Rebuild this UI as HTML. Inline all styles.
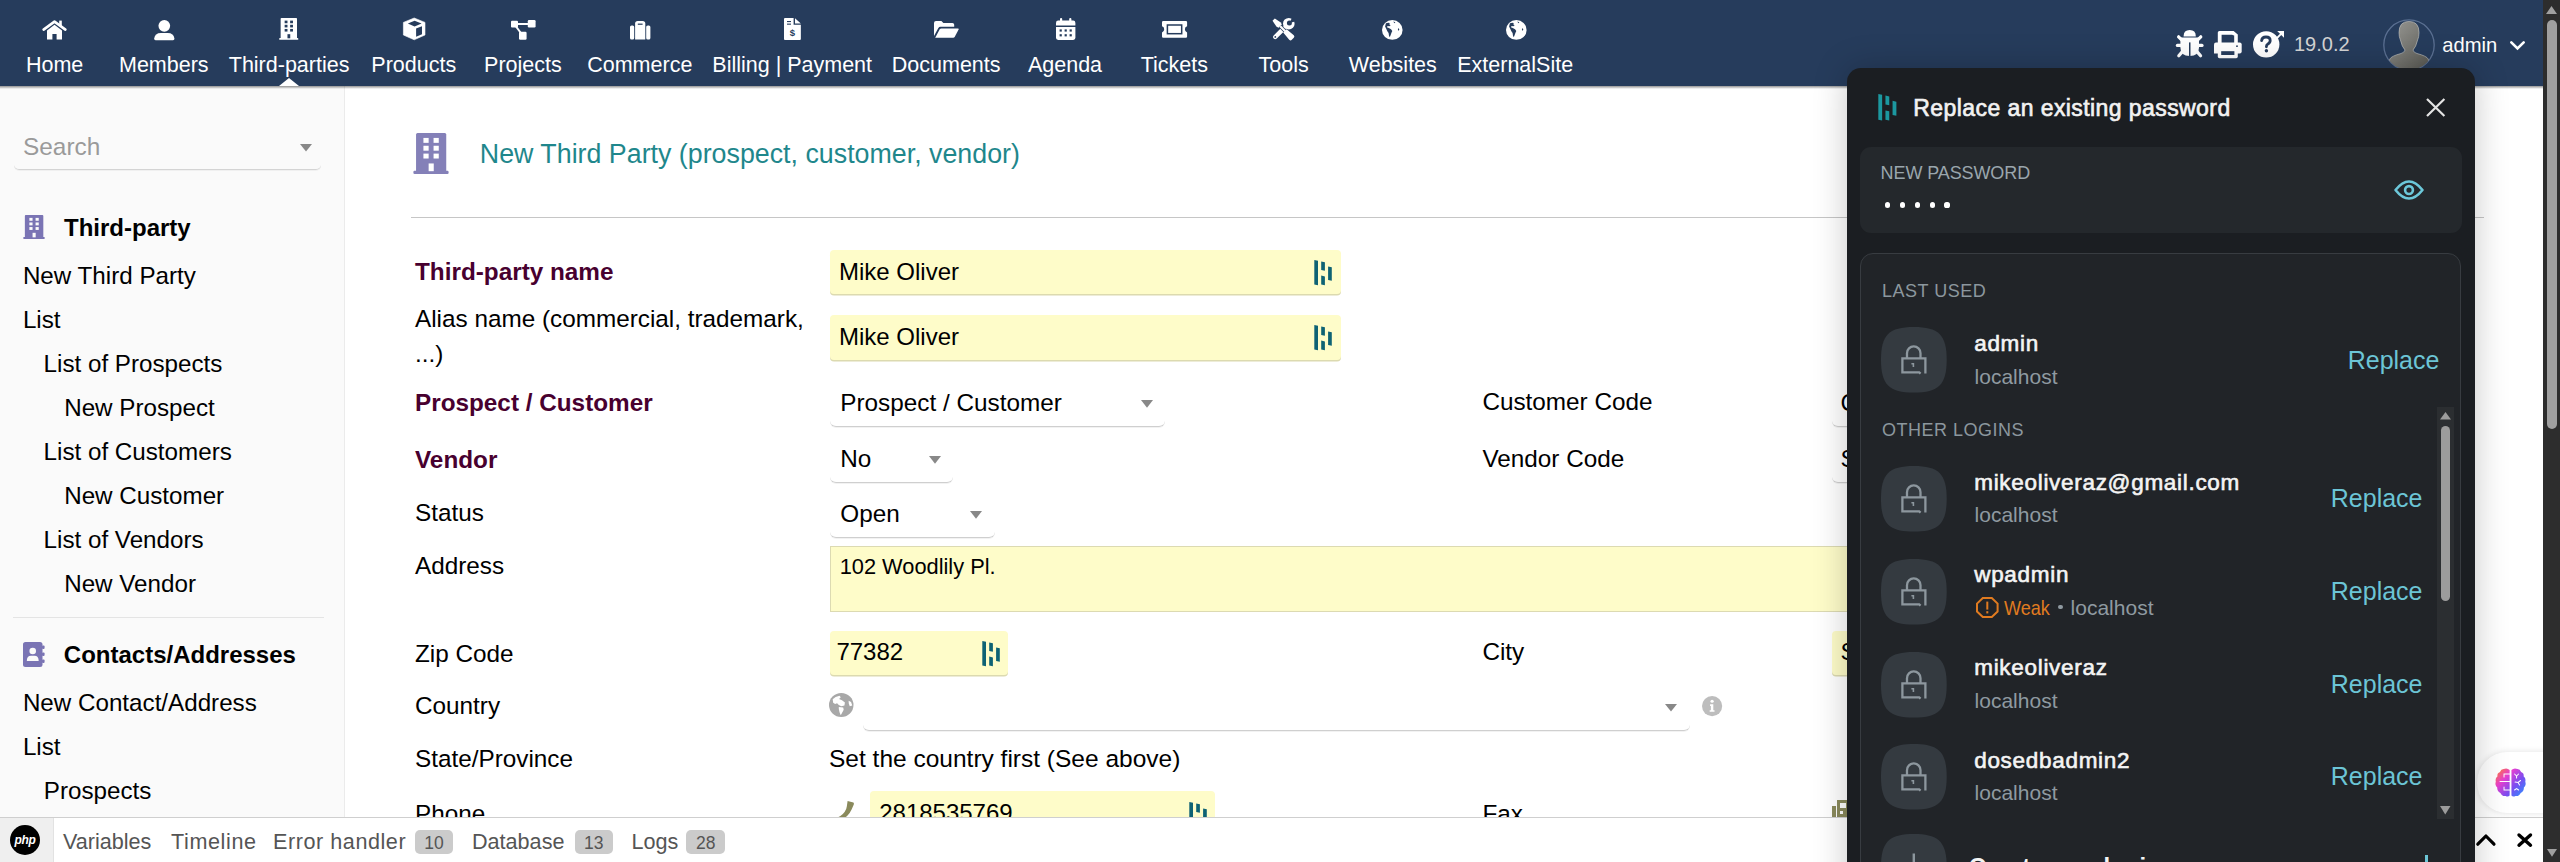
<!DOCTYPE html><html><head><meta charset="utf-8"><title>Dolibarr</title><style>
html,body{margin:0;padding:0;}
body{width:2560px;height:862px;overflow:hidden;position:relative;background:#fff;font-family:"Liberation Sans",sans-serif;}
.a{position:absolute;}
.t{position:absolute;white-space:nowrap;line-height:1;}
svg.a{overflow:visible;}
</style></head><body>
<div class="a" style="left:0px;top:86px;width:344.00px;height:731.00px;background:#fafafa;"></div>
<div class="a" style="left:344px;top:86px;width:1.00px;height:731.00px;background:#ebebeb;"></div>
<div class="t" style="left:23.0px;top:134.9px;font-size:24.4px;color:#9a9a9a;">Search</div>
<div class="a" style="left:14px;top:161px;width:307.00px;height:8.00px;border-bottom:1px solid #d4d4d4;border-radius:0 0 5px 5px;box-shadow:0 1px 0.6px rgba(0,0,0,0.04);"></div>
<svg class="a" style="left:300px;top:143.5px;width:12.00px;height:7.50px;" viewBox="0 0 12 7.5" preserveAspectRatio="none"><path d="M0 0H12L6 7.5Z" fill="#888"/></svg>
<svg class="a" style="left:23px;top:215px;width:22.00px;height:24.00px;" viewBox="0 0 36.6 40.8" preserveAspectRatio="none"><rect x="3.1" y="0" width="30.7" height="38.5" rx="1.5" fill="#7a74b4"/><rect x="0.4" y="37.6" width="35.8" height="3.2" rx="1.2" fill="#7a74b4"/><rect x="10.6" y="4.9" width="5.3" height="4.9" fill="#fafafa"/><rect x="10.6" y="12.7" width="5.3" height="4.9" fill="#fafafa"/><rect x="10.6" y="20.5" width="5.3" height="4.9" fill="#fafafa"/><rect x="20.9" y="4.9" width="5.3" height="4.9" fill="#fafafa"/><rect x="20.9" y="12.7" width="5.3" height="4.9" fill="#fafafa"/><rect x="20.9" y="20.5" width="5.3" height="4.9" fill="#fafafa"/><rect x="15.9" y="30.3" width="5.2" height="7.7" fill="#fafafa"/></svg>
<div class="t" style="left:64.0px;top:215.9px;font-size:24px;color:#000;font-weight:bold;">Third-party</div>
<div class="t" style="left:22.9px;top:263.6px;font-size:24.2px;color:#000;">New Third Party</div>
<div class="t" style="left:22.9px;top:307.6px;font-size:24.2px;color:#000;">List</div>
<div class="t" style="left:43.6px;top:351.6px;font-size:24.2px;color:#000;">List of Prospects</div>
<div class="t" style="left:64.2px;top:395.6px;font-size:24.2px;color:#000;">New Prospect</div>
<div class="t" style="left:43.6px;top:439.6px;font-size:24.2px;color:#000;">List of Customers</div>
<div class="t" style="left:64.2px;top:483.6px;font-size:24.2px;color:#000;">New Customer</div>
<div class="t" style="left:43.6px;top:527.6px;font-size:24.2px;color:#000;">List of Vendors</div>
<div class="t" style="left:64.2px;top:571.6px;font-size:24.2px;color:#000;">New Vendor</div>
<div class="a" style="left:13px;top:617px;width:311.00px;height:1.00px;background:#e4e4e4;"></div>
<svg class="a" style="left:23px;top:642px;width:21.60px;height:25.00px;" viewBox="0 0 21.6 25" preserveAspectRatio="none"><rect x="0" y="0" width="19.5" height="25" rx="2.5" fill="#7a74b4"/><rect x="19" y="3.5" width="2.6" height="3.5" rx="1" fill="#7a74b4"/><rect x="19" y="10.5" width="2.6" height="3.5" rx="1" fill="#7a74b4"/><rect x="19" y="17.5" width="2.6" height="3.5" rx="1" fill="#7a74b4"/><circle cx="9.75" cy="9" r="3.3" fill="#fafafa"/><path d="M3.8 19 Q3.8 13.8 8 13.8 H11.5 Q15.7 13.8 15.7 19Z" fill="#fafafa"/></svg>
<div class="t" style="left:63.8px;top:643.0px;font-size:24px;color:#000;font-weight:bold;">Contacts/Addresses</div>
<div class="t" style="left:22.9px;top:690.5px;font-size:24.2px;color:#000;">New Contact/Address</div>
<div class="t" style="left:22.9px;top:734.5px;font-size:24.2px;color:#000;">List</div>
<div class="t" style="left:43.8px;top:778.5px;font-size:24.2px;color:#000;">Prospects</div>
<svg class="a" style="left:413px;top:133px;width:36.00px;height:41.00px;" viewBox="0 0 36.6 40.8" preserveAspectRatio="none"><rect x="3.1" y="0" width="30.7" height="38.5" rx="1.5" fill="#8480b8"/><rect x="0.4" y="37.6" width="35.8" height="3.2" rx="1.2" fill="#8480b8"/><rect x="10.6" y="4.9" width="5.3" height="4.9" fill="#fff"/><rect x="10.6" y="12.7" width="5.3" height="4.9" fill="#fff"/><rect x="10.6" y="20.5" width="5.3" height="4.9" fill="#fff"/><rect x="20.9" y="4.9" width="5.3" height="4.9" fill="#fff"/><rect x="20.9" y="12.7" width="5.3" height="4.9" fill="#fff"/><rect x="20.9" y="20.5" width="5.3" height="4.9" fill="#fff"/><rect x="15.9" y="30.3" width="5.2" height="7.7" fill="#fff"/></svg>
<div class="t" style="left:479.8px;top:140.6px;font-size:26.8px;color:#1f878c;">New Third Party (prospect, customer, vendor)</div>
<div class="a" style="left:411px;top:216.5px;width:2073.00px;height:1.00px;background:#c6c6c6;"></div>
<div class="t" style="left:415.0px;top:259.8px;font-size:24.3px;color:#48002f;font-weight:bold;">Third-party name</div>
<div class="t" style="left:415.0px;top:307.2px;font-size:24.3px;color:#000;">Alias name (commercial, trademark,</div>
<div class="t" style="left:415.0px;top:342.2px;font-size:24.3px;color:#000;">...)</div>
<div class="t" style="left:415.0px;top:390.9px;font-size:24.3px;color:#48002f;font-weight:bold;">Prospect / Customer</div>
<div class="t" style="left:415.0px;top:448.4px;font-size:24.3px;color:#48002f;font-weight:bold;">Vendor</div>
<div class="t" style="left:415.0px;top:501.4px;font-size:24.3px;color:#000;">Status</div>
<div class="t" style="left:415.0px;top:553.7px;font-size:24.3px;color:#000;">Address</div>
<div class="t" style="left:415.0px;top:641.7px;font-size:24.3px;color:#000;">Zip Code</div>
<div class="t" style="left:415.0px;top:694.0px;font-size:24.3px;color:#000;">Country</div>
<div class="t" style="left:415.0px;top:747.3px;font-size:24.3px;color:#000;">State/Province</div>
<div class="t" style="left:415.0px;top:802.4px;font-size:24.3px;color:#000;">Phone</div>
<div class="t" style="left:1482.4px;top:390.3px;font-size:24.3px;color:#000;">Customer Code</div>
<div class="t" style="left:1482.4px;top:446.9px;font-size:24.3px;color:#000;">Vendor Code</div>
<div class="t" style="left:1482.4px;top:639.9px;font-size:24.3px;color:#000;">City</div>
<div class="t" style="left:1482.4px;top:802.4px;font-size:24.3px;color:#000;">Fax</div>
<div class="a" style="left:830px;top:249.5px;width:511.00px;height:44.50px;background:#fefcc9;border-radius:4px;box-shadow:0 1.5px 0 #dcdab0;"></div>
<div class="t" style="left:839.0px;top:259.7px;font-size:24px;color:#000;">Mike Oliver</div>
<svg class="a" style="left:1314px;top:259.6px;width:18.00px;height:25.20px;" viewBox="0 0 18 25.2" preserveAspectRatio="none"><path d="M0.3 0 L4 0.8 V25.2 L0.3 24.4Z" fill="#0e6274"/><path d="M7.2 1.5 L10.9 2.3 V10.8 L7.2 10Z" fill="#0e6274"/><path d="M7.2 15.6 L10.9 16.4 V25.2 L7.2 24.4Z" fill="#0e6274"/><path d="M14.1 6.5 L17.8 7.3 V20.7 L14.1 19.9Z" fill="#0e6274"/></svg>
<div class="a" style="left:830px;top:315px;width:511.00px;height:44.50px;background:#fefcc9;border-radius:4px;box-shadow:0 1.5px 0 #dcdab0;"></div>
<div class="t" style="left:839.0px;top:324.5px;font-size:24px;color:#000;">Mike Oliver</div>
<svg class="a" style="left:1314px;top:324.6px;width:18.00px;height:25.20px;" viewBox="0 0 18 25.2" preserveAspectRatio="none"><path d="M0.3 0 L4 0.8 V25.2 L0.3 24.4Z" fill="#0e6274"/><path d="M7.2 1.5 L10.9 2.3 V10.8 L7.2 10Z" fill="#0e6274"/><path d="M7.2 15.6 L10.9 16.4 V25.2 L7.2 24.4Z" fill="#0e6274"/><path d="M14.1 6.5 L17.8 7.3 V20.7 L14.1 19.9Z" fill="#0e6274"/></svg>
<div class="a" style="left:830px;top:417px;width:335.00px;height:9.00px;border-bottom:1px solid #cfcfcf;border-radius:0 0 6px 6px;box-shadow:0 1px 0.6px rgba(0,0,0,0.05);"></div>
<div class="t" style="left:840.3px;top:390.5px;font-size:24.3px;color:#000;">Prospect / Customer</div>
<svg class="a" style="left:1141px;top:400px;width:12.00px;height:7.80px;" viewBox="0 0 12 7.8" preserveAspectRatio="none"><path d="M0 0H12L6 7.8Z" fill="#888"/></svg>
<div class="a" style="left:830px;top:473px;width:123.00px;height:9.00px;border-bottom:1px solid #cfcfcf;border-radius:0 0 6px 6px;box-shadow:0 1px 0.6px rgba(0,0,0,0.05);"></div>
<div class="t" style="left:840.3px;top:447.0px;font-size:24.3px;color:#000;">No</div>
<svg class="a" style="left:929px;top:456px;width:12.00px;height:7.80px;" viewBox="0 0 12 7.8" preserveAspectRatio="none"><path d="M0 0H12L6 7.8Z" fill="#888"/></svg>
<div class="a" style="left:830px;top:528px;width:165.00px;height:9.00px;border-bottom:1px solid #cfcfcf;border-radius:0 0 6px 6px;box-shadow:0 1px 0.6px rgba(0,0,0,0.05);"></div>
<div class="t" style="left:840.3px;top:502.4px;font-size:24.3px;color:#000;">Open</div>
<svg class="a" style="left:970px;top:511px;width:12.00px;height:7.80px;" viewBox="0 0 12 7.8" preserveAspectRatio="none"><path d="M0 0H12L6 7.8Z" fill="#888"/></svg>
<div class="a" style="left:1832px;top:417px;width:168.00px;height:9.00px;border-bottom:1px solid #cfcfcf;border-radius:0 0 6px 6px;box-shadow:0 1px 0.6px rgba(0,0,0,0.05);"></div>
<svg class="a" style="left:3000px;top:400px;width:12.00px;height:7.80px;" viewBox="0 0 12 7.8" preserveAspectRatio="none"><path d="M0 0H12L6 7.8Z" fill="#888"/></svg>
<div class="t" style="left:1840.5px;top:390.6px;font-size:24px;color:#000;">C</div>
<div class="a" style="left:1832px;top:473px;width:168.00px;height:9.00px;border-bottom:1px solid #cfcfcf;border-radius:0 0 6px 6px;box-shadow:0 1px 0.6px rgba(0,0,0,0.05);"></div>
<svg class="a" style="left:3000px;top:456px;width:12.00px;height:7.80px;" viewBox="0 0 12 7.8" preserveAspectRatio="none"><path d="M0 0H12L6 7.8Z" fill="#888"/></svg>
<div class="t" style="left:1840.5px;top:447.2px;font-size:24px;color:#000;">S</div>
<div class="a" style="left:830px;top:546px;width:1070.00px;height:66.00px;background:#fefcc9;border:1px solid #dcdab2;box-sizing:border-box;"></div>
<div class="t" style="left:839.7px;top:555.6px;font-size:21.8px;color:#000;">102 Woodlily Pl.</div>
<div class="a" style="left:830px;top:631px;width:178.00px;height:44.00px;background:#fefcc9;border-radius:4px;box-shadow:0 1.5px 0 #dcdab0;"></div>
<div class="t" style="left:836.4px;top:639.9px;font-size:24px;color:#000;">77382</div>
<svg class="a" style="left:981.5px;top:640.5px;width:18.00px;height:25.20px;" viewBox="0 0 18 25.2" preserveAspectRatio="none"><path d="M0.3 0 L4 0.8 V25.2 L0.3 24.4Z" fill="#0e6274"/><path d="M7.2 1.5 L10.9 2.3 V10.8 L7.2 10Z" fill="#0e6274"/><path d="M7.2 15.6 L10.9 16.4 V25.2 L7.2 24.4Z" fill="#0e6274"/><path d="M14.1 6.5 L17.8 7.3 V20.7 L14.1 19.9Z" fill="#0e6274"/></svg>
<div class="a" style="left:1832px;top:631px;width:168.00px;height:44.00px;background:#fefcc9;border-radius:4px;box-shadow:0 1.5px 0 #dcdab0;"></div>
<div class="t" style="left:1840.5px;top:639.9px;font-size:24px;color:#000;">S</div>
<svg class="a" style="left:829px;top:692.5px;width:24.50px;height:24.00px;" viewBox="0 0 20 20" preserveAspectRatio="none"><circle cx="10" cy="10" r="10" fill="#a8a8a8"/><path d="M3 5.2 Q5 2.6 8.6 2.2 L9.6 3.6 L8.2 5 L10.6 6 L13 8 L12.6 10.4 L10 11 L8 10 L6.6 8.6 L5 9.2 L3.4 8.2Z" fill="#fff"/><path d="M8 11.6 L11.6 12 L12 14 L10.6 16.6 L9.6 18.6 L8.6 16 L8 13.4Z" fill="#fff"/><path d="M16 6.4 L18 7.4 L19 10.4 L17 11 L16.2 9Z" fill="#fff"/></svg>
<div class="a" style="left:863px;top:722px;width:826.50px;height:8.00px;border-bottom:1px solid #cfcfcf;border-radius:0 0 6px 6px;box-shadow:0 1px 0.6px rgba(0,0,0,0.05);"></div>
<svg class="a" style="left:1665px;top:703.6px;width:12.00px;height:7.60px;" viewBox="0 0 12 7.6" preserveAspectRatio="none"><path d="M0 0H12L6 7.6Z" fill="#888"/></svg>
<svg class="a" style="left:1702px;top:695.6px;width:20.20px;height:20.20px;" viewBox="0 0 20 20" preserveAspectRatio="none"><circle cx="10" cy="10" r="10" fill="#bdbdbd"/><circle cx="10" cy="5.2" r="1.6" fill="#fff"/><path d="M8 8.2H11.2V14H12.4V15.6H7.6V14H8.8V9.8H8Z" fill="#fff"/></svg>
<div class="t" style="left:829.0px;top:746.7px;font-size:24.5px;color:#000;">Set the country first (See above)</div>
<svg class="a" style="left:833px;top:801px;width:21.00px;height:21.00px;" viewBox="0 0 21 21" preserveAspectRatio="none"><path d="M14.6 0 L20.4 1.4 Q21.2 2 20.8 3.4 L18.6 8.6 Q15 16.6 7 19.6 L0.6 21 L0 18.4 L4.6 16.6 Q10.6 14 13.2 8 L13.8 5.6Z" fill="#8a8a5c"/></svg>
<div class="a" style="left:869.6px;top:791.3px;width:345.40px;height:48.70px;background:#fefcc9;border-radius:4px;box-shadow:0 1.5px 0 #dcdab0;"></div>
<div class="t" style="left:879.2px;top:801.2px;font-size:24px;color:#000;">2818535769</div>
<svg class="a" style="left:1188.8px;top:801.8px;width:18.00px;height:25.20px;" viewBox="0 0 18 25.2" preserveAspectRatio="none"><path d="M0.3 0 L4 0.8 V25.2 L0.3 24.4Z" fill="#0e6274"/><path d="M7.2 1.5 L10.9 2.3 V10.8 L7.2 10Z" fill="#0e6274"/><path d="M7.2 15.6 L10.9 16.4 V25.2 L7.2 24.4Z" fill="#0e6274"/><path d="M14.1 6.5 L17.8 7.3 V20.7 L14.1 19.9Z" fill="#0e6274"/></svg>
<svg class="a" style="left:1832px;top:800px;width:18.00px;height:22.00px;" viewBox="0 0 18 22" preserveAspectRatio="none"><rect x="0" y="6" width="4" height="16" fill="#8a8a5c"/><rect x="5" y="0" width="13" height="22" fill="#8a8a5c"/><rect x="8" y="3" width="6" height="5" fill="#fff"/><rect x="8" y="11" width="3" height="3" fill="#fff"/></svg>
<div class="a" style="left:0px;top:0px;width:2543.00px;height:86.00px;background:#263c5c;"></div>
<div class="a" style="left:0px;top:86px;width:2543.00px;height:2.50px;background:linear-gradient(rgba(0,0,0,0.42),rgba(0,0,0,0));"></div>
<div class="t" style="left:-95.4px;width:300px;text-align:center;top:54.6px;font-size:21.5px;color:#fff;font-weight:normal">Home</div>
<div class="t" style="left:13.8px;width:300px;text-align:center;top:54.6px;font-size:21.5px;color:#fff;font-weight:normal">Members</div>
<div class="t" style="left:139.1px;width:300px;text-align:center;top:54.6px;font-size:21.5px;color:#fff;font-weight:normal">Third-parties</div>
<div class="t" style="left:263.8px;width:300px;text-align:center;top:54.6px;font-size:21.5px;color:#fff;font-weight:normal">Products</div>
<div class="t" style="left:372.9px;width:300px;text-align:center;top:54.6px;font-size:21.5px;color:#fff;font-weight:normal">Projects</div>
<div class="t" style="left:489.8px;width:300px;text-align:center;top:54.6px;font-size:21.5px;color:#fff;font-weight:normal">Commerce</div>
<div class="t" style="left:642.2px;width:300px;text-align:center;top:54.6px;font-size:21.5px;color:#fff;font-weight:normal">Billing | Payment</div>
<div class="t" style="left:796.2px;width:300px;text-align:center;top:54.6px;font-size:21.5px;color:#fff;font-weight:normal">Documents</div>
<div class="t" style="left:915.0px;width:300px;text-align:center;top:54.6px;font-size:21.5px;color:#fff;font-weight:normal">Agenda</div>
<div class="t" style="left:1024.4px;width:300px;text-align:center;top:54.6px;font-size:21.5px;color:#fff;font-weight:normal">Tickets</div>
<div class="t" style="left:1133.6px;width:300px;text-align:center;top:54.6px;font-size:21.5px;color:#fff;font-weight:normal">Tools</div>
<div class="t" style="left:1242.8px;width:300px;text-align:center;top:54.6px;font-size:21.5px;color:#fff;font-weight:normal">Websites</div>
<div class="t" style="left:1365.2px;width:300px;text-align:center;top:54.6px;font-size:21.5px;color:#fff;font-weight:normal">ExternalSite</div>
<svg class="a" style="left:279px;top:78px;width:20.00px;height:8.00px;" viewBox="0 0 20 8" preserveAspectRatio="none"><path d="M0 8 L10 0 L20 8Z" fill="#fff"/></svg>
<svg class="a" style="left:42px;top:19.6px;width:25.00px;height:19.40px;" viewBox="0 0 25 19.4" preserveAspectRatio="none"><path d="M1.6 9.6 L12.5 1.6 L23.4 9.6" fill="none" stroke="#fff" stroke-width="2.6" stroke-linecap="round" stroke-linejoin="round"/><rect x="17.2" y="0.6" width="2.6" height="5.6" fill="#fff"/><path d="M5 10.4 L12.5 4.8 L20 10.4 V19.4 H14.6 V14 H10.4 V19.4 H5Z" fill="#fff"/></svg>
<svg class="a" style="left:153.6px;top:19.6px;width:20.60px;height:20.15px;" viewBox="0 0 20.6 20.15" preserveAspectRatio="none"><circle cx="10.3" cy="5.85" r="5.85" fill="#fff"/><path d="M1.6 20.15 Q0 20.15 0.2 18.4 Q1 12.9 6.8 12.9 H13.8 Q19.6 12.9 20.4 18.4 Q20.6 20.15 19 20.15Z" fill="#fff"/></svg>
<svg class="a" style="left:279px;top:18.2px;width:19.50px;height:21.80px;" viewBox="0 0 36.6 40.8" preserveAspectRatio="none"><rect x="3.1" y="0" width="30.7" height="38.5" rx="1.5" fill="#fff"/><rect x="0.4" y="37.6" width="35.8" height="3.2" rx="1.2" fill="#fff"/><rect x="10.6" y="4.9" width="5.3" height="4.9" fill="#263c5c"/><rect x="10.6" y="12.7" width="5.3" height="4.9" fill="#263c5c"/><rect x="10.6" y="20.5" width="5.3" height="4.9" fill="#263c5c"/><rect x="20.9" y="4.9" width="5.3" height="4.9" fill="#263c5c"/><rect x="20.9" y="12.7" width="5.3" height="4.9" fill="#263c5c"/><rect x="20.9" y="20.5" width="5.3" height="4.9" fill="#263c5c"/><rect x="15.9" y="30.3" width="5.2" height="7.7" fill="#263c5c"/></svg>
<svg class="a" style="left:402.6px;top:18.2px;width:22.40px;height:21.80px;" viewBox="0 0 22.4 21.8" preserveAspectRatio="none"><path d="M11.2 0 L22 4.4 V17 L11.2 21.8 L0.4 17 V4.4Z" fill="#fff" stroke="#fff" stroke-width="0.6" stroke-linejoin="round"/><path d="M11.6 2.7 L18.6 5.6 L11.6 8.5 L4.8 5.6Z" fill="#263c5c"/><path d="M13.1 10.6 L19 8.2 V16.2 L13.1 18.8Z" fill="#263c5c"/></svg>
<svg class="a" style="left:510.9px;top:19.6px;width:24.60px;height:19.70px;" viewBox="0 0 24.6 19.7" preserveAspectRatio="none"><rect x="0" y="0.8" width="7" height="6.6" rx="1" fill="#fff"/><rect x="16.8" y="0" width="7.8" height="7.4" rx="1.2" fill="#fff"/><rect x="8" y="11.8" width="7.6" height="7.9" rx="1.2" fill="#fff"/><path d="M6 4 H17" stroke="#fff" stroke-width="2"/><path d="M5 6.5 L9.5 12.5" stroke="#fff" stroke-width="2"/></svg>
<svg class="a" style="left:630px;top:20.7px;width:20.40px;height:18.60px;" viewBox="0 0 20.4 18.6" preserveAspectRatio="none"><rect x="0" y="4.4" width="4.2" height="14.2" rx="1.6" fill="#fff"/><rect x="16.2" y="4.4" width="4.2" height="14.2" rx="1.6" fill="#fff"/><path d="M5.1 18.6 V2.6 Q5.1 0 7.7 0 H12.7 Q15.3 0 15.3 2.6 V18.6Z" fill="#fff"/><rect x="7.8" y="2.6" width="4.8" height="1.2" fill="#263c5c"/></svg>
<svg class="a" style="left:783.75px;top:18.1px;width:16.85px;height:21.90px;" viewBox="0 0 16.85 21.9" preserveAspectRatio="none"><path d="M0 1 Q0 0 1 0 H9.6 V6.8 H16.85 V20.9 Q16.85 21.9 15.85 21.9 H1 Q0 21.9 0 20.9Z" fill="#fff"/><path d="M11 0.2 L16.85 5.6 H11Z" fill="#fff"/><rect x="3" y="3" width="4" height="1.1" fill="#263c5c"/><rect x="3" y="5.6" width="4" height="1.1" fill="#263c5c"/><text x="8.4" y="17.6" font-size="9.5" font-weight="bold" font-family="Liberation Sans" text-anchor="middle" fill="#263c5c">$</text></svg>
<svg class="a" style="left:933.75px;top:20.6px;width:25.00px;height:16.65px;" viewBox="0 0 25 16.65" preserveAspectRatio="none"><path d="M0 2 Q0 0 2 0 H7.4 L9.4 2 H18.4 Q20.2 2 20.2 3.8 V5.8 H6.4 Q5 5.8 4.2 7.2 L0 15Z" fill="#fff"/><path d="M1.2 16.65 L5.6 8.4 Q6.2 7.4 7.4 7.4 H23.8 Q25.2 7.4 24.6 8.6 L20.8 15.8 Q20.3 16.65 19.2 16.65Z" fill="#fff"/></svg>
<svg class="a" style="left:1055.6px;top:18.1px;width:19.40px;height:21.90px;" viewBox="0 0 19.4 21.9" preserveAspectRatio="none"><path d="M0 5 Q0 2.6 2.2 2.6 H17.2 Q19.4 2.6 19.4 5 V7.6 H0Z" fill="#fff"/><rect x="4" y="0" width="2.2" height="4.4" rx="1" fill="#fff"/><rect x="13.2" y="0" width="2.2" height="4.4" rx="1" fill="#fff"/><path d="M0 9 H19.4 V19.8 Q19.4 21.9 17.2 21.9 H2.2 Q0 21.9 0 19.8Z" fill="#fff"/><rect x="3.6" y="11.4" width="2.2" height="2.2" fill="#263c5c"/><rect x="3.6" y="16.2" width="2.2" height="2.2" fill="#263c5c"/><rect x="8.6" y="11.4" width="2.2" height="2.2" fill="#263c5c"/><rect x="8.6" y="16.2" width="2.2" height="2.2" fill="#263c5c"/><rect x="13.6" y="11.4" width="2.2" height="2.2" fill="#263c5c"/><rect x="13.6" y="16.2" width="2.2" height="2.2" fill="#263c5c"/></svg>
<svg class="a" style="left:1162.2px;top:20.7px;width:25.10px;height:16.70px;" viewBox="0 0 25.1 16.7" preserveAspectRatio="none"><path d="M1.2 0 H23.9 Q25.1 0 25.1 1.2 V5.2 Q22.9 5.8 22.9 8.35 Q22.9 10.9 25.1 11.5 V15.5 Q25.1 16.7 23.9 16.7 H1.2 Q0 16.7 0 15.5 V11.5 Q2.2 10.9 2.2 8.35 Q2.2 5.8 0 5.2 V1.2 Q0 0 1.2 0Z" fill="#fff"/><rect x="5.4" y="4" width="14.3" height="8.7" fill="none" stroke="#263c5c" stroke-width="1.5"/></svg>
<svg class="a" style="left:1271.9px;top:18.4px;width:22.80px;height:22.10px;" viewBox="0 0 22.8 22.1" preserveAspectRatio="none"><path d="M11.6 10.6 L3.2 19" stroke="#fff" stroke-width="4.4" stroke-linecap="round"/><circle cx="16.8" cy="5.7" r="5.8" fill="#fff"/><circle cx="17.4" cy="5.1" r="2.5" fill="#263c5c"/><path d="M17.4 5.1 L20.2 -0.6 L24 3.2Z" fill="#263c5c"/><circle cx="3.3" cy="18.9" r="0.9" fill="#263c5c"/><path d="M8.2 8.2 L13.2 13.2" stroke="#263c5c" stroke-width="3.6"/><path d="M0.5 2.8 L2.8 0.5 L8.8 4.6 L9.8 6.6 L6.6 9.8 L4.6 8.8Z" fill="#fff"/><path d="M8.2 8.2 L13.2 13.2" stroke="#fff" stroke-width="2.2"/><path d="M11.2 14.6 L14.6 11.2 L21.8 17.2 Q23 18.6 21.8 19.8 L19.8 21.8 Q18.6 23 17.2 21.8Z" fill="#fff"/></svg>
<svg class="a" style="left:1382.3px;top:19.9px;width:20.60px;height:19.80px;" viewBox="0 0 20 20" preserveAspectRatio="none"><circle cx="10" cy="10" r="10" fill="#fff"/><path d="M3.8 3.4 Q5.6 2.4 7.6 3 L7 4.4 L8.4 5.2 L7.2 6.4 L5.4 6 L4.8 7.4 L6.6 8.2 L8.8 9.4 L10 11 L9.2 13 L8.4 15.2 L7.6 17.4 L6.8 15.8 L6.4 13.2 L5.2 11.4 L4.2 9 L3 6.6Z" fill="#263c5c"/><path d="M15.8 8 L16.8 9.4 L16.4 10.8 L15.4 10Z" fill="#263c5c"/><path d="M11 1.6 L13 2.2 L12 3.2Z" fill="#263c5c"/></svg>
<svg class="a" style="left:1505.7px;top:19.9px;width:20.60px;height:19.80px;" viewBox="0 0 20 20" preserveAspectRatio="none"><circle cx="10" cy="10" r="10" fill="#fff"/><path d="M3.8 3.4 Q5.6 2.4 7.6 3 L7 4.4 L8.4 5.2 L7.2 6.4 L5.4 6 L4.8 7.4 L6.6 8.2 L8.8 9.4 L10 11 L9.2 13 L8.4 15.2 L7.6 17.4 L6.8 15.8 L6.4 13.2 L5.2 11.4 L4.2 9 L3 6.6Z" fill="#263c5c"/><path d="M15.8 8 L16.8 9.4 L16.4 10.8 L15.4 10Z" fill="#263c5c"/><path d="M11 1.6 L13 2.2 L12 3.2Z" fill="#263c5c"/></svg>
<svg class="a" style="left:2176px;top:30.2px;width:27.40px;height:27.50px;" viewBox="0 0 27.4 27.5" preserveAspectRatio="none"><path d="M7.6 6.4 Q7.6 0 13.7 0 Q19.8 0 19.8 6.4Z" fill="#fff"/><path d="M4.4 7.4 H23 V17.6 Q23 26 13.7 26 Q4.4 26 4.4 17.6Z" fill="#fff"/><rect x="13" y="12.4" width="1.5" height="13.8" fill="#263c5c"/><g stroke="#fff" stroke-width="3.2" stroke-linecap="round"><path d="M6.4 10.6 L2.6 6.8"/><path d="M21 10.6 L24.8 6.8"/><path d="M5 15.4 H1.4"/><path d="M22.4 15.4 H26"/><path d="M6.4 21.6 L2.8 25.8"/><path d="M21 21.6 L24.6 25.8"/></g></svg>
<svg class="a" style="left:2213.9px;top:30.5px;width:27.70px;height:27.20px;" viewBox="0 0 27.7 27.2" preserveAspectRatio="none"><path d="M3.8 12 V1.6 Q3.8 0 5.4 0 H19.6 L23.8 3.6 V12 H20.2 V4.6 L18.4 4 V3.8 H7.6 V12Z" fill="#fff"/><path d="M0 20.6 V13.4 Q0 11.4 2 11.4 H25.7 Q27.7 11.4 27.7 13.4 V20.6 Q27.7 22.6 25.7 22.6 H0Z" fill="#fff"/><path d="M3.8 19 H23.8 V25.6 Q23.8 27.2 22.2 27.2 H5.4 Q3.8 27.2 3.8 25.6Z" fill="#fff"/><rect x="7.2" y="20.2" width="13.2" height="3.8" fill="#263c5c"/><circle cx="23" cy="15.2" r="0.9" fill="#263c5c"/></svg>
<svg class="a" style="left:2252.8px;top:30.7px;width:31.00px;height:26.60px;" viewBox="0 0 31 26.6" preserveAspectRatio="none"><circle cx="13.2" cy="13.4" r="13.2" fill="#fff"/><path d="M8.6 9.6 Q9 6 13 6 Q17.2 6 17.2 9.6 Q17.2 12 14.6 13.2 Q13.4 13.8 13.4 15.8" fill="none" stroke="#263c5c" stroke-width="2.8" stroke-linecap="round"/><circle cx="13.4" cy="19.8" r="1.7" fill="#263c5c"/><path d="M22 9 L29.4 1.6" stroke="#fff" stroke-width="1.8"/><path d="M24.2 0 H31 V6.8Z" fill="#fff"/></svg>
<div class="t" style="left:2294.0px;top:34.1px;font-size:20px;color:#d4d4d4;">19.0.2</div>
<svg class="a" style="left:2383px;top:19px;width:52.00px;height:52.00px;" viewBox="0 0 52 52" preserveAspectRatio="none"><defs><clipPath id="cp"><circle cx="26" cy="26" r="25"/></clipPath><linearGradient id="gg" x1="0" y1="0" x2="1" y2="1"><stop offset="0" stop-color="#9a9a96"/><stop offset="1" stop-color="#55554f"/></linearGradient></defs><circle cx="26" cy="26" r="25.2" fill="#263c5c" stroke="#5b7092" stroke-width="1.3"/><g clip-path="url(#cp)"><path d="M16 13.5 Q16 2.4 26 2.4 Q36 2.4 36 13.5 Q36 18 34.6 21 Q33 28 30 31 Q30.5 33.5 34 34.5 Q43.6 37 45.2 40 Q46.8 46 47 52 H5 Q5.2 46 6.8 40 Q8.4 37 18 34.5 Q21.5 33.5 22 31 Q19 28 17.4 21 Q16 18 16 13.5Z" fill="url(#gg)" stroke="#c8c8c4" stroke-width="0.6"/></g></svg>
<div class="t" style="left:2442.3px;top:35.1px;font-size:20.2px;color:#fff;">admin</div>
<svg class="a" style="left:2510px;top:41px;width:15.00px;height:9.00px;" viewBox="0 0 15 9" preserveAspectRatio="none"><path d="M1.3 1.3 L7.5 7.5 L13.7 1.3" fill="none" stroke="#fff" stroke-width="2.6" stroke-linecap="round"/></svg>
<div class="a" style="left:0px;top:816.5px;width:2543.00px;height:45.50px;background:#fff;border-top:1px solid #cfcfcf;box-sizing:border-box;"></div>
<div class="a" style="left:0px;top:817.5px;width:54.30px;height:44.50px;background:#efefef;border-right:1px solid #e2e2e2;box-sizing:border-box;"></div>
<svg class="a" style="left:10.2px;top:825.4px;width:30.00px;height:30.00px;" viewBox="0 0 30 30" preserveAspectRatio="none"><circle cx="15" cy="15" r="15" fill="#000"/><text x="15" y="19" font-size="12" font-style="italic" font-weight="bold" font-family="Liberation Sans" text-anchor="middle" fill="#fff" letter-spacing="-0.4">php</text></svg>
<div class="t" style="left:63.0px;top:830.7px;font-size:21.6px;color:#555;">Variables</div>
<div class="t" style="left:171.0px;top:830.7px;font-size:21.6px;color:#555;letter-spacing:0.6px;">Timeline</div>
<div class="t" style="left:273.0px;top:830.7px;font-size:21.6px;color:#555;letter-spacing:0.55px;">Error handler</div>
<div class="a" style="left:414.7px;top:830.4px;width:38.80px;height:23.60px;background:#cbcbcb;border-radius:5px;"></div>
<div class="t" style="left:414.1px;width:40px;text-align:center;top:835.2px;font-size:17.5px;color:#555;font-weight:normal">10</div>
<div class="t" style="left:472.0px;top:830.7px;font-size:21.6px;color:#555;">Database</div>
<div class="a" style="left:574.6px;top:830.4px;width:38.10px;height:23.60px;background:#cbcbcb;border-radius:5px;"></div>
<div class="t" style="left:573.7px;width:40px;text-align:center;top:835.2px;font-size:17.5px;color:#555;font-weight:normal">13</div>
<div class="t" style="left:631.5px;top:830.7px;font-size:21.6px;color:#555;">Logs</div>
<div class="a" style="left:686.2px;top:830.4px;width:39.10px;height:23.60px;background:#cbcbcb;border-radius:5px;"></div>
<div class="t" style="left:685.8px;width:40px;text-align:center;top:835.2px;font-size:17.5px;color:#555;font-weight:normal">28</div>
<svg class="a" style="left:2475.6px;top:834px;width:19.80px;height:12.00px;" viewBox="0 0 19.8 12" preserveAspectRatio="none"><path d="M1.8 10.2 L9.9 2 L18 10.2" fill="none" stroke="#000" stroke-width="3.2" stroke-linecap="round" stroke-linejoin="round"/></svg>
<svg class="a" style="left:2517.3px;top:832.6px;width:15.50px;height:14.20px;" viewBox="0 0 15.5 14.2" preserveAspectRatio="none"><path d="M2 2 L13.5 12.2 M13.5 2 L2 12.2" fill="none" stroke="#000" stroke-width="3.4" stroke-linecap="round"/></svg>
<div class="a" style="left:2477px;top:752px;width:123.00px;height:61.00px;background:#fff;border-radius:31px;box-shadow:0 0 6px rgba(0,0,0,0.12);"></div>
<svg class="a" style="left:2494.7px;top:767.6px;width:31.10px;height:29.00px;" viewBox="0 0 31 29" preserveAspectRatio="none"><defs><linearGradient id="bg1" gradientUnits="userSpaceOnUse" x1="2" y1="2" x2="29" y2="27"><stop offset="0" stop-color="#ff7a3d"/><stop offset="0.3" stop-color="#e83fd0"/><stop offset="0.65" stop-color="#7b4df0"/><stop offset="1" stop-color="#2f8cff"/></linearGradient></defs><path d="M14.6 2 Q12 -0.6 8.6 1 Q6 1.2 5 4 Q2 5 2.4 8.4 Q0 10.2 0.8 13.8 Q-0.4 17 2.2 19.6 Q2 23.6 5.4 25 Q7 28.6 10.6 28 Q13 29.4 14.6 27.6Z" fill="url(#bg1)"/><path d="M16.4 2 Q19 -0.6 22.4 1 Q25 1.2 26 4 Q29 5 28.6 8.4 Q31 10.2 30.2 13.8 Q31.4 17 28.8 19.6 Q29 23.6 25.6 25 Q24 28.6 20.4 28 Q18 29.4 16.4 27.6Z" fill="url(#bg1)"/><g stroke="#fff" stroke-width="1" fill="none" stroke-linecap="round"><path d="M14.6 6 H9 V9"/><path d="M14.6 13.5 H5"/><path d="M14.6 22 H9 V19"/><path d="M19.5 6 L21.5 8 L23.5 6 M21.5 8 V10"/><path d="M20 14 L23 14.5 L25.5 12.5 M23 14.5 L24.5 17"/><path d="M19.5 22 L21.5 20.5 L23.5 22"/></g></svg>
<div class="a" style="left:1847px;top:68px;width:628.00px;height:832.00px;border-radius:14px 14px 0 0;box-shadow:0 0 34px rgba(0,0,0,0.22);background:#1b1e22;"></div>
<svg class="a" style="left:1878.3px;top:94.3px;width:18.6px;height:26.5px;" viewBox="0 0 18 25.2" preserveAspectRatio="none"><path d="M0.3 0 L4 0.8 V25.2 L0.3 24.4Z" fill="#1c98a0"/><path d="M7.2 1.5 L10.9 2.3 V10.8 L7.2 10Z" fill="#1c98a0"/><path d="M7.2 15.6 L10.9 16.4 V25.2 L7.2 24.4Z" fill="#1c98a0"/><path d="M14.1 6.5 L17.8 7.3 V20.7 L14.1 19.9Z" fill="#1c98a0"/></svg>
<div class="t" style="left:1913.3px;top:96.9px;font-size:23px;color:#f2f2f2;letter-spacing:0.42px;-webkit-text-stroke:0.65px #f2f2f2;">Replace an existing password</div>
<svg class="a" style="left:2426px;top:97.8px;width:19.40px;height:19.00px;" viewBox="0 0 19.4 19" preserveAspectRatio="none"><path d="M1 1 L18.4 18 M18.4 1 L1 18" stroke="#e4e4e4" stroke-width="2.2"/></svg>
<div class="a" style="left:1860px;top:147px;width:601.60px;height:86.00px;background:#24282c;border-radius:11px;"></div>
<div class="t" style="left:1880.6px;top:163.6px;font-size:18px;color:#9aa6ad;letter-spacing:-0.1px;">NEW PASSWORD</div>
<div class="a" style="left:1885.0px;top:202.4px;width:5.20px;height:5.20px;background:#fff;border-radius:50%;"></div>
<div class="a" style="left:1899.85px;top:202.4px;width:5.20px;height:5.20px;background:#fff;border-radius:50%;"></div>
<div class="a" style="left:1914.7px;top:202.4px;width:5.20px;height:5.20px;background:#fff;border-radius:50%;"></div>
<div class="a" style="left:1929.55px;top:202.4px;width:5.20px;height:5.20px;background:#fff;border-radius:50%;"></div>
<div class="a" style="left:1944.4px;top:202.4px;width:5.20px;height:5.20px;background:#fff;border-radius:50%;"></div>
<svg class="a" style="left:2394px;top:178.7px;width:30.00px;height:22.10px;" viewBox="0 0 30 22.1" preserveAspectRatio="none"><path d="M1.5 11.05 Q15 -6 28.5 11.05 Q15 28.1 1.5 11.05Z" fill="none" stroke="#6cc8da" stroke-width="2.6" stroke-linejoin="round"/><circle cx="15" cy="11.05" r="3.9" fill="none" stroke="#6cc8da" stroke-width="2.6"/></svg>
<div class="a" style="left:1860px;top:253.3px;width:601.00px;height:646.70px;background:#212428;border:1.5px solid #383c41;border-radius:13px;box-sizing:border-box;"></div>
<div class="t" style="left:1882.0px;top:282.0px;font-size:18px;color:#8c979e;letter-spacing:0.5px;">LAST USED</div>
<div class="t" style="left:1882.0px;top:421.2px;font-size:18px;color:#8c979e;letter-spacing:0.5px;">OTHER LOGINS</div>
<svg class="a" style="left:1881.3px;top:327.4px;width:65.70px;height:65.60px;" viewBox="0 0 65.7 65.6" preserveAspectRatio="none"><path d="M32.85 0 C8 0 0 8 0 32.8 C0 57.6 8 65.6 32.85 65.6 C57.7 65.6 65.7 57.6 65.7 32.8 C65.7 8 57.7 0 32.85 0Z" fill="#343a40"/><g fill="none" stroke="#8d979e" stroke-width="2.3"><path d="M26 31.3 V26.2 A6.75 6.75 0 0 1 39.5 26.2 V31.3"/><path d="M44.4 46.4 V31.4 H21.4 V45.3 H38.2 L39.6 46.6"/></g><path d="M30.4 36 H33.2 V40 H31.6 V37.5 H30.4Z" fill="#8d979e"/></svg>
<div class="t" style="left:1974.2px;top:333.3px;font-size:22.5px;color:#f4f4f4;letter-spacing:0.7px;-webkit-text-stroke:0.6px #f4f4f4;">admin</div>
<div class="t" style="left:1974.6px;top:365.9px;font-size:21px;color:#8f9aa1;">localhost</div>
<div class="t" style="left:2347.7px;top:347.5px;font-size:25px;color:#6cc5d6;">Replace</div>
<svg class="a" style="left:1881.3px;top:466px;width:65.70px;height:65.60px;" viewBox="0 0 65.7 65.6" preserveAspectRatio="none"><path d="M32.85 0 C8 0 0 8 0 32.8 C0 57.6 8 65.6 32.85 65.6 C57.7 65.6 65.7 57.6 65.7 32.8 C65.7 8 57.7 0 32.85 0Z" fill="#343a40"/><g fill="none" stroke="#8d979e" stroke-width="2.3"><path d="M26 31.3 V26.2 A6.75 6.75 0 0 1 39.5 26.2 V31.3"/><path d="M44.4 46.4 V31.4 H21.4 V45.3 H38.2 L39.6 46.6"/></g><path d="M30.4 36 H33.2 V40 H31.6 V37.5 H30.4Z" fill="#8d979e"/></svg>
<div class="t" style="left:1974.2px;top:472.2px;font-size:22.5px;color:#f4f4f4;letter-spacing:0.7px;-webkit-text-stroke:0.6px #f4f4f4;">mikeoliveraz@gmail.com</div>
<div class="t" style="left:1974.6px;top:504.0px;font-size:21px;color:#8f9aa1;">localhost</div>
<div class="t" style="left:2330.8px;top:486.1px;font-size:25px;color:#6cc5d6;">Replace</div>
<svg class="a" style="left:1881.3px;top:559px;width:65.70px;height:65.60px;" viewBox="0 0 65.7 65.6" preserveAspectRatio="none"><path d="M32.85 0 C8 0 0 8 0 32.8 C0 57.6 8 65.6 32.85 65.6 C57.7 65.6 65.7 57.6 65.7 32.8 C65.7 8 57.7 0 32.85 0Z" fill="#343a40"/><g fill="none" stroke="#8d979e" stroke-width="2.3"><path d="M26 31.3 V26.2 A6.75 6.75 0 0 1 39.5 26.2 V31.3"/><path d="M44.4 46.4 V31.4 H21.4 V45.3 H38.2 L39.6 46.6"/></g><path d="M30.4 36 H33.2 V40 H31.6 V37.5 H30.4Z" fill="#8d979e"/></svg>
<div class="t" style="left:1974.2px;top:564.2px;font-size:22.5px;color:#f4f4f4;letter-spacing:0.7px;-webkit-text-stroke:0.6px #f4f4f4;">wpadmin</div>
<svg class="a" style="left:1975.6px;top:597.3px;width:22.60px;height:21.10px;" viewBox="0 0 22.6 21.1" preserveAspectRatio="none"><path d="M6.8 1 H15.8 L21.6 6.6 V14.5 L15.8 20.1 H6.8 L1 14.5 V6.6Z" fill="none" stroke="#e07b20" stroke-width="2"/><rect x="10.3" y="4.6" width="2" height="8" fill="#e07b20"/><rect x="10.3" y="14.2" width="2" height="2.2" fill="#e07b20"/></svg>
<div class="t" style="left:2004.2px;top:596.6px;font-size:21px;color:#e07b20;transform:scaleX(0.86);transform-origin:0 0;">Weak</div>
<div class="a" style="left:2058px;top:604.5px;width:4.50px;height:4.50px;background:#8f9aa1;border-radius:50%;"></div>
<div class="t" style="left:2070.6px;top:596.6px;font-size:21px;color:#8f9aa1;">localhost</div>
<div class="t" style="left:2330.8px;top:579.1px;font-size:25px;color:#6cc5d6;">Replace</div>
<svg class="a" style="left:1881.3px;top:651.5px;width:65.70px;height:65.60px;" viewBox="0 0 65.7 65.6" preserveAspectRatio="none"><path d="M32.85 0 C8 0 0 8 0 32.8 C0 57.6 8 65.6 32.85 65.6 C57.7 65.6 65.7 57.6 65.7 32.8 C65.7 8 57.7 0 32.85 0Z" fill="#343a40"/><g fill="none" stroke="#8d979e" stroke-width="2.3"><path d="M26 31.3 V26.2 A6.75 6.75 0 0 1 39.5 26.2 V31.3"/><path d="M44.4 46.4 V31.4 H21.4 V45.3 H38.2 L39.6 46.6"/></g><path d="M30.4 36 H33.2 V40 H31.6 V37.5 H30.4Z" fill="#8d979e"/></svg>
<div class="t" style="left:1974.2px;top:656.8px;font-size:22.5px;color:#f4f4f4;letter-spacing:0.7px;-webkit-text-stroke:0.6px #f4f4f4;">mikeoliveraz</div>
<div class="t" style="left:1974.6px;top:689.6px;font-size:21px;color:#8f9aa1;">localhost</div>
<div class="t" style="left:2330.8px;top:671.6px;font-size:25px;color:#6cc5d6;">Replace</div>
<svg class="a" style="left:1881.3px;top:743.8px;width:65.70px;height:65.60px;" viewBox="0 0 65.7 65.6" preserveAspectRatio="none"><path d="M32.85 0 C8 0 0 8 0 32.8 C0 57.6 8 65.6 32.85 65.6 C57.7 65.6 65.7 57.6 65.7 32.8 C65.7 8 57.7 0 32.85 0Z" fill="#343a40"/><g fill="none" stroke="#8d979e" stroke-width="2.3"><path d="M26 31.3 V26.2 A6.75 6.75 0 0 1 39.5 26.2 V31.3"/><path d="M44.4 46.4 V31.4 H21.4 V45.3 H38.2 L39.6 46.6"/></g><path d="M30.4 36 H33.2 V40 H31.6 V37.5 H30.4Z" fill="#8d979e"/></svg>
<div class="t" style="left:1974.2px;top:749.5px;font-size:22.5px;color:#f4f4f4;letter-spacing:0.7px;-webkit-text-stroke:0.6px #f4f4f4;">dosedbadmin2</div>
<div class="t" style="left:1974.6px;top:782.2px;font-size:21px;color:#8f9aa1;">localhost</div>
<div class="t" style="left:2330.8px;top:763.9px;font-size:25px;color:#6cc5d6;">Replace</div>
<svg class="a" style="left:1881.3px;top:833.8px;width:65.70px;height:65.60px;" viewBox="0 0 65.7 65.6" preserveAspectRatio="none"><path d="M32.85 0 C8 0 0 8 0 32.8 C0 57.6 8 65.6 32.85 65.6 C57.7 65.6 65.7 57.6 65.7 32.8 C65.7 8 57.7 0 32.85 0Z" fill="#343a40"/><rect x="31.6" y="19.5" width="2.4" height="30" fill="#8d979e"/></svg>
<div class="t" style="left:1968.8px;top:854.7px;font-size:24px;color:#f4f4f4;font-weight:bold;">Create new login</div>
<div class="a" style="left:2425px;top:855px;width:2.50px;height:15.00px;background:#6cc5d6;"></div>
<div class="a" style="left:2436.9px;top:406.5px;width:16.90px;height:412.30px;background:#2b2e31;"></div>
<svg class="a" style="left:2440px;top:412.3px;width:11.00px;height:7.50px;" viewBox="0 0 11 7.5" preserveAspectRatio="none"><path d="M0 7.5 L5.5 0 L11 7.5Z" fill="#9c9c9c"/></svg>
<div class="a" style="left:2440.8px;top:426.3px;width:9.20px;height:174.70px;background:#9c9c9c;border-radius:5px;"></div>
<svg class="a" style="left:2440px;top:806px;width:10.50px;height:8.50px;" viewBox="0 0 10.5 8.5" preserveAspectRatio="none"><path d="M0 0 L10.5 0 L5.25 8.5Z" fill="#9c9c9c"/></svg>
<div class="a" style="left:2543px;top:0px;width:17.00px;height:862.00px;background:#2d2d2d;"></div>
<svg class="a" style="left:2546px;top:5.6px;width:11.00px;height:7.90px;" viewBox="0 0 11 7.9" preserveAspectRatio="none"><path d="M0 7.9 L5.5 0 L11 7.9Z" fill="#a0a0a0"/></svg>
<div class="a" style="left:2547px;top:19.5px;width:9.50px;height:409.90px;background:#a0a0a0;border-radius:5px;"></div>
<svg class="a" style="left:2547px;top:849px;width:10.00px;height:7.70px;" viewBox="0 0 10 7.7" preserveAspectRatio="none"><path d="M0 0 L10 0 L5 7.7Z" fill="#a0a0a0"/></svg>
</body></html>
